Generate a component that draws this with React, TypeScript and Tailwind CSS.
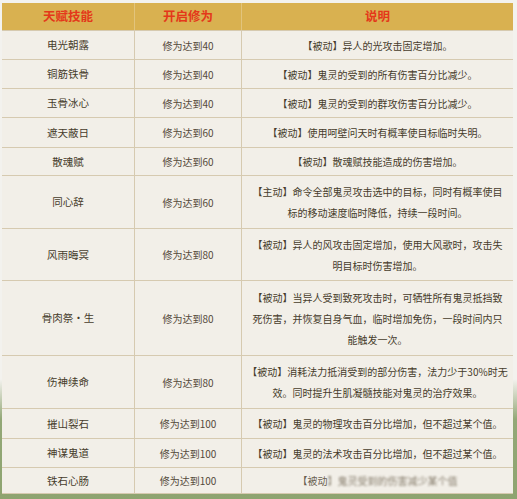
import React from "react";

type Row = { name: string; req: string; desc: string[]; h: number; blur?: boolean };

const rows: Row[] = [
  { name: "电光朝露", req: "修为达到40", desc: ["【被动】异人的光攻击固定增加。"], h: 29 },
  { name: "铜筋铁骨", req: "修为达到40", desc: ["【被动】鬼灵的受到的所有伤害百分比减少。"], h: 29 },
  { name: "玉骨冰心", req: "修为达到40", desc: ["【被动】鬼灵的受到的群攻伤害百分比减少。"], h: 29 },
  { name: "遮天蔽日", req: "修为达到60", desc: ["【被动】使用呵壁问天时有概率使目标临时失明。"], h: 30 },
  { name: "散魂赋", req: "修为达到60", desc: ["【被动】散魂赋技能造成的伤害增加。"], h: 28 },
  {
    name: "同心辞",
    req: "修为达到60",
    desc: ["【主动】命令全部鬼灵攻击选中的目标，同时有概率使目", "标的移动速度临时降低，持续一段时间。"],
    h: 53,
  },
  {
    name: "风雨晦冥",
    req: "修为达到80",
    desc: ["【被动】异人的风攻击固定增加，使用大风歌时，攻击失", "明目标时伤害增加。"],
    h: 52,
  },
  {
    name: "骨肉祭・生",
    req: "修为达到80",
    desc: [
      "【被动】当异人受到致死攻击时，可牺牲所有鬼灵抵挡致",
      "死伤害，并恢复自身气血，临时增加免伤，一段时间内只",
      "能触发一次。",
    ],
    h: 75,
  },
  {
    name: "伤神续命",
    req: "修为达到80",
    desc: ["【被动】消耗法力抵消受到的部分伤害，法力少于30%时无", "效。同时提升生肌凝髓技能对鬼灵的治疗效果。"],
    h: 53,
  },
  { name: "摧山裂石", req: "修为达到100", desc: ["【被动】鬼灵的物理攻击百分比增加，但不超过某个值。"], h: 30 },
  { name: "神谋鬼道", req: "修为达到100", desc: ["【被动】鬼灵的法术攻击百分比增加，但不超过某个值。"], h: 29 },
  { name: "铁石心肠", req: "修为达到100", desc: ["【被动】鬼灵受到的伤害减少"], h: 26, blur: true },
];

export default function App() {
  return (
    <div
      className="w-[517px] h-[499px] overflow-hidden flex flex-col bg-[linear-gradient(to_bottom,#f3f2ee_0%,#f3f2ee_76%,#93a877_84%,#8ea470_100%)]"
      style={{ fontFamily: '"Noto Sans CJK SC", "Noto Sans", sans-serif' }}
    >
      <div className="h-[3px] shrink-0" />
      <div className="ml-[2px] w-[511px] flex flex-col text-[#463c2b]">
        {/* header */}
        <div className="flex h-[27px] bg-[#d9b150] text-[#e4381a] font-bold text-[12.5px]">
          <div className="w-[133px] flex items-center justify-center border-r border-[#e2c47c]">天赋技能</div>
          <div className="w-[107px] flex items-center justify-center border-r border-[#e2c47c]">开启修为</div>
          <div className="flex-1 flex items-center justify-center">说明</div>
        </div>
        {rows.map((r, i) => (
          <div
            key={i}
            className="flex bg-[#f2efe8] border-t border-[#d6cab0]"
            style={{ height: r.h }}
          >
            <div className="w-[133px] flex items-center justify-center border-r border-[#d6cab0] text-[10.5px]">
              {r.name}
            </div>
            <div className="w-[107px] flex items-center justify-center border-r border-[#d6cab0] text-[10px] text-[#54493a]">
              {r.req}
            </div>
            <div className="flex-1 flex flex-col items-center justify-center text-[10px] leading-[21px]">
              {r.desc.map((l, j) => (
                <div key={j} className={"whitespace-nowrap " + (r.blur ? "text-[#6a6050]" : "")}>
                  {r.blur ? (
                    <>
                      <span>【被动</span>
                      <span className="blur-[1px] text-[#8a8070]">】鬼灵受到的伤害减少某个值</span>
                    </>
                  ) : (
                    l
                  )}
                </div>
              ))}
            </div>
          </div>
        ))}
        <div className="h-[1px] bg-[#d6cab0]" />
      </div>
    </div>
  );
}
